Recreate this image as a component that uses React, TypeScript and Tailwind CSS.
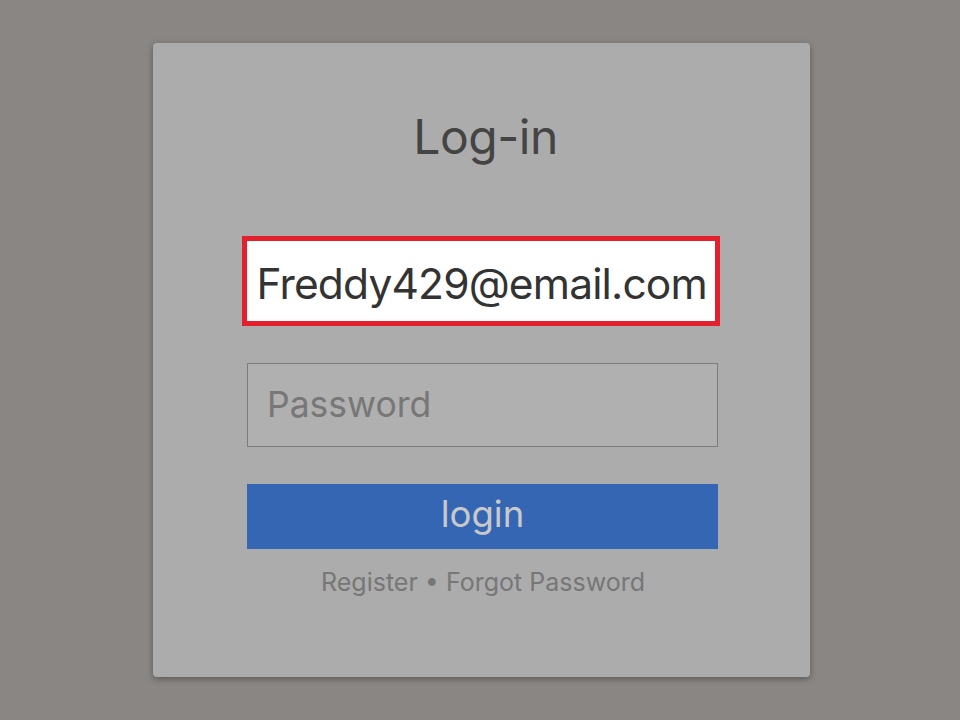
import React from 'react';

const font = { fontFamily: 'Inter, "Noto Sans", sans-serif' };

export default function App() {
  return (
    <div className="w-[960px] h-[720px] bg-[#8a8683] flex pl-[153px] pt-[43px]" style={font}>
      <div className="w-[657px] h-[634px] bg-[#acacac] rounded-[4px] shadow-[0_2px_6px_rgba(0,0,0,0.35)] flex flex-col items-center">
        <h1 className="mt-[70px] pl-[8px] text-[48px] leading-none text-[#444444] tracking-[-0.01em]">Log-in</h1>

        <div className="mt-[75px] -ml-[2px] w-[478px] h-[90px] border-[5px] border-[#e3202b] bg-white flex items-center pl-[10px] pt-[6px]">
          <span className="text-[42.5px] text-[#333333] tracking-[-0.02em] leading-none">Freddy429@email.com</span>
        </div>

        <div className="mt-[37px] ml-[2px] w-[471px] h-[84px] border border-[#7c7c7c] bg-[#b0b0b0] flex items-center pl-[19px]">
          <span className="text-[35.5px] text-[#777777] leading-none">Password</span>
        </div>

        <button className="mt-[37px] ml-[2px] w-[471px] h-[65px] bg-[#3566b3] text-[#c9c9c9] text-[36.5px] leading-none flex items-center justify-center pb-[4px]">
          login
        </button>

        <div className="mt-[21px] ml-[3px] text-[25px] text-[#777777] leading-none">
          Register • Forgot Password
        </div>
      </div>
    </div>
  );
}
